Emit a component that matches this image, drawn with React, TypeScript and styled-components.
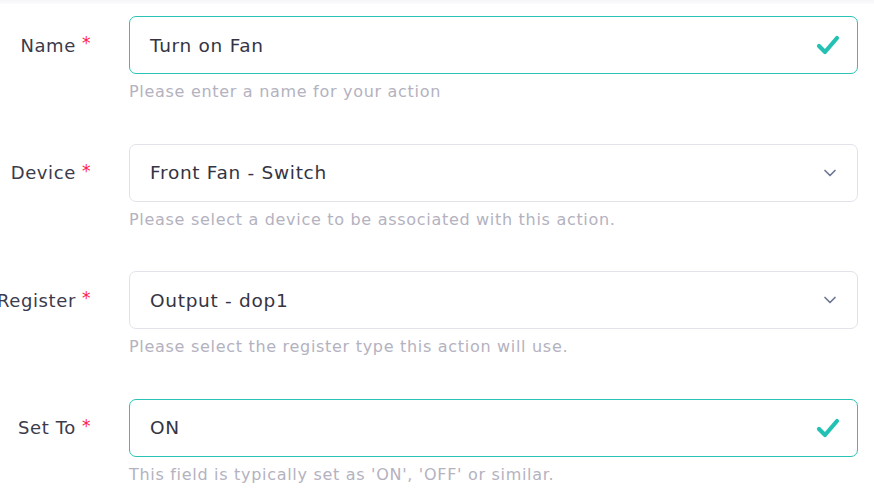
import styled, { createGlobalStyle } from "styled-components";

const GlobalStyle = createGlobalStyle`
  html, body {
    margin: 0;
    padding: 0;
    background: #ffffff;
    font-family: "DejaVu Sans", "Noto Sans", sans-serif;
  }
`;

const TopShade = styled.div`
  height: 4px;
  background: linear-gradient(#f6f6f8, #fbfbfc);
`;

const Form = styled.div`
  display: flex;
  flex-direction: column;
  gap: 39.5px;
  padding: 12px 16px 0 0;
  overflow: hidden;
`;

const Row = styled.div`
  display: grid;
  grid-template-columns: 91px 1fr;
  column-gap: 38px;
  row-gap: 6px;
`;

const Label = styled.label`
  display: flex;
  justify-content: flex-end;
  align-items: center;
  white-space: nowrap;
  font-size: 18px;
  letter-spacing: 0.6px;
  color: #3b3b4b;
  height: 58px;
`;

const Required = styled.span`
  color: #ff2347;
  margin-left: 6px;
  font-size: 17px;
  position: relative;
  top: -2px;
`;

const Field = styled.div<{ $valid?: boolean }>`
  display: flex;
  align-items: center;
  justify-content: space-between;
  box-sizing: border-box;
  height: 58px;
  padding: 0 17px 0 20px;
  border: 1px solid ${(p) => (p.$valid ? "#2bc3b6" : "#e3e2ea")};
  border-radius: 7px;
  background: #fff;
  font-size: 18.5px;
  letter-spacing: 0.7px;
  color: #343444;
`;

const Help = styled.div`
  grid-column: 2;
  font-size: 16px;
  letter-spacing: 0.7px;
  color: #b4b2c0;
  line-height: 24px;
`;

const Check = () => (
  <svg width="24" height="22" viewBox="0 0 24 22">
    <path
      d="M3 12 L9 18 L21 4"
      fill="none"
      stroke="#22c1b3"
      strokeWidth="4.2"
      strokeLinecap="round"
      strokeLinejoin="round"
    />
  </svg>
);

const Chevron = () => (
  <svg width="14" height="10" viewBox="0 0 14 10" style={{ marginRight: 3 }}>
    <path
      d="M2 2.5 L7 7.5 L12 2.5"
      fill="none"
      stroke="#6f7893"
      strokeWidth="1.7"
      strokeLinecap="round"
      strokeLinejoin="round"
    />
  </svg>
);

interface FieldData {
  label: string;
  value: string;
  help: string;
  kind: "check" | "select";
}

const fields: FieldData[] = [
  { label: "Name", value: "Turn on Fan", help: "Please enter a name for your action", kind: "check" },
  { label: "Device", value: "Front Fan - Switch", help: "Please select a device to be associated with this action.", kind: "select" },
  { label: "Register", value: "Output - dop1", help: "Please select the register type this action will use.", kind: "select" },
  { label: "Set To", value: "ON", help: "This field is typically set as 'ON', 'OFF' or similar.", kind: "check" },
];

export default function App() {
  return (
    <>
      <GlobalStyle />
      <TopShade />
      <Form>
        {fields.map((f) => (
          <Row key={f.label}>
            <Label>
              {f.label}
              <Required>*</Required>
            </Label>
            <Field $valid={f.kind === "check"}>
              <span>{f.value}</span>
              {f.kind === "check" ? <Check /> : <Chevron />}
            </Field>
            <Help>{f.help}</Help>
          </Row>
        ))}
      </Form>
    </>
  );
}
